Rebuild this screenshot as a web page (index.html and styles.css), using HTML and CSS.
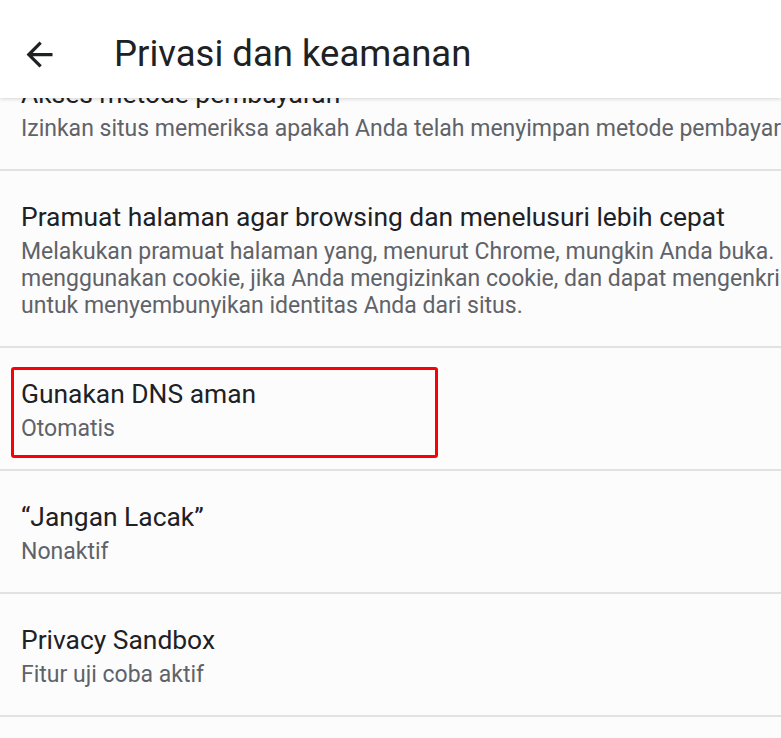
FILE: index.html
```html
<!DOCTYPE html>
<html lang="id">

<head>
    <meta charset="UTF-8">
    <meta name="viewport" content="width=device-width, initial-scale=1.0">
    <title>Privasi dan keamanan</title>
    <link rel="stylesheet" href="styles.css">
</head>

<body>

    <header class="toolbar">
        <a href="#" class="back-btn" title="Kembali">
            <svg viewBox="0 0 24 24" width="39" height="39">
                <path d="M20 11H7.83l5.59-5.59L12 4l-8 8 8 8 1.41-1.41L7.83 13H20v-2z" fill="#202124" />
            </svg>
        </a>
        <h1>Privasi dan keamanan</h1>
    </header>

    <ul class="prefs">
        <li class="pref">
            <div class="pref-text">
                <div class="pref-title">Akses metode pembayaran</div>
                <div class="pref-summary">Izinkan situs memeriksa apakah Anda telah menyimpan metode pembayaran</div>
            </div>
        </li>
        <li class="pref">
            <div class="pref-text">
                <div class="pref-title">Pramuat halaman agar browsing dan menelusuri lebih cepat</div>
                <div class="pref-summary">Melakukan pramuat halaman yang, menurut Chrome, mungkin Anda buka. Untuk melakukannya, Chrome mungkin<br>menggunakan cookie, jika Anda mengizinkan cookie, dan dapat mengenkripsi serta mengirim halaman melalui Google<br>untuk menyembunyikan identitas Anda dari situs.</div>
            </div>
        </li>
        <li class="pref">
            <div class="pref-text marked">
                <div class="pref-title">Gunakan DNS aman</div>
                <div class="pref-summary">Otomatis</div>
            </div>
        </li>
        <li class="pref">
            <div class="pref-text">
                <div class="pref-title">&ldquo;Jangan Lacak&rdquo;</div>
                <div class="pref-summary">Nonaktif</div>
            </div>
        </li>
        <li class="pref">
            <div class="pref-text">
                <div class="pref-title">Privacy Sandbox</div>
                <div class="pref-summary">Fitur uji coba aktif</div>
            </div>
        </li>
    </ul>

</body>

</html>
```

FILE: styles.css
```css
body {
    font-family: Roboto, "Noto Sans", sans-serif;
    background-color: #fdfcfd;
    margin: 0;
    padding: 0;
    overflow: hidden;
    height: 738px;
    color: #202124;
}

.toolbar {
    position: relative;
    z-index: 10;
    height: 98px;
    display: flex;
    align-items: center;
    padding: 0 0 0 20px;
    background-color: white;
    box-shadow: 0 1px 4px rgba(0, 0, 0, 0.16);
}

.back-btn {
    display: flex;
    width: 39px;
    height: 39px;
    margin-top: 10px;
}

.toolbar h1 {
    margin: 9px 0 0 55px;
    font-size: 36.5px;
    font-weight: 400;
    color: #202124;
}

.prefs {
    list-style: none;
    margin: -50px 0 0;
    padding: 0;
}

.pref {
    padding: 28px 21px 27px;
    border-bottom: 2px solid #e2e2e2;
    white-space: nowrap;
}

.pref-title {
    font-size: 26.4px;
    line-height: 36px;
    color: #202124;
}

.pref-summary {
    margin-top: 3px;
    font-size: 23px;
    line-height: 27px;
    color: #5f6368;
}

/* red annotation round the DNS row */
.pref-text.marked {
    box-sizing: border-box;
    width: 427px;
    margin: -9px 0 -16px -10px;
    padding: 6px 7px 13px;
    border: 3px solid #fa0008;
    border-radius: 3px;
}
```
